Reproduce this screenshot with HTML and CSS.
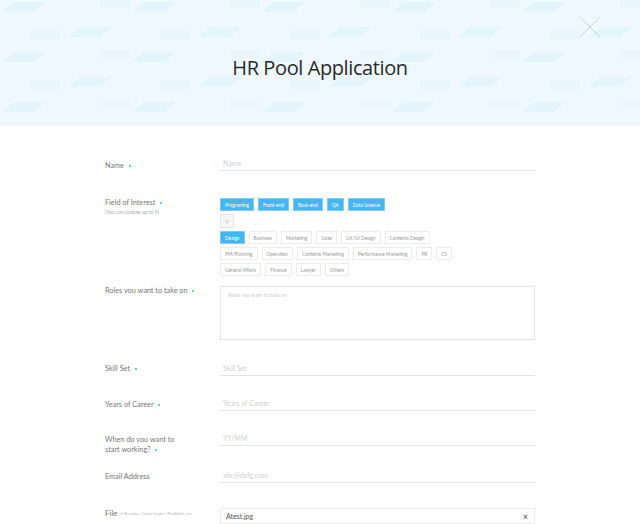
FILE: index.html
```html
<!DOCTYPE html>
<html lang="en">
<head>
<meta charset="utf-8">
<title>HR Pool Application</title>
<link rel="stylesheet" href="styles.css">
</head>
<body>
<header class="hero">
  <svg class="hero-bg" width="640" height="126" aria-hidden="true">
    <defs>
      <pattern id="para" x="0" y="0" width="130" height="50" patternUnits="userSpaceOnUse">
        <polygon points="14,2 46,2 34,12 2,12" fill="#e4f4fd"/>
        <polygon points="80,27 112,27 100,37 68,37" fill="#e4f4fd"/>
        <polygon points="100,0 130,0 130,8 100,8" fill="#eaf6fd"/>
        <polygon points="30,30 60,30 60,40 30,40" fill="#eaf6fd"/>
      </pattern>
    </defs>
    <rect width="640" height="126" fill="url(#para)"/>
  </svg>
  <h1 class="title">HR Pool Application</h1>
  <button class="close" aria-label="Close">
    <svg width="22" height="22" viewBox="0 0 22 22"><path d="M1 1 L21 21 M21 1 L1 21" stroke="#c9d2d8" stroke-width="1" fill="none"/></svg>
  </button>
</header>

<main class="form">
  <div class="row row-name">
    <div class="label">Name <span class="req"></span></div>
    <div class="field"><div class="input ph">Name</div></div>
  </div>

  <div class="row row-interest">
    <div class="label">Field of Interest <span class="req"></span><div class="sub">(You can choose up to 5)</div></div>
    <div class="field">
      <div class="tags">
        <span class="tag on">Programing</span><span class="tag on">Front-end</span><span class="tag on">Back-end</span><span class="tag on">QA</span><span class="tag on">Data Science</span>
      </div>
      <div class="tags"><span class="plus">+</span></div>
      <div class="tags">
        <span class="tag on">Design</span><span class="tag">Business</span><span class="tag">Marketing</span><span class="tag">Sales</span><span class="tag">UX/UI Design</span><span class="tag">Contents Design</span>
      </div>
      <div class="tags">
        <span class="tag">PM/Planning</span><span class="tag">Operation</span><span class="tag">Contents Marketing</span><span class="tag">Performance Marketing</span><span class="tag">PR</span><span class="tag">CS</span>
      </div>
      <div class="tags">
        <span class="tag">General Affairs</span><span class="tag">Finance</span><span class="tag">Lawyer</span><span class="tag">Others</span>
      </div>
    </div>
  </div>

  <div class="row row-roles">
    <div class="label">Roles you want to take on <span class="req"></span></div>
    <div class="field"><div class="textarea ph">Roles you want to take on</div></div>
  </div>

  <div class="row row-skill">
    <div class="label">Skill Set <span class="req"></span></div>
    <div class="field"><div class="input ph">Skill Set</div></div>
  </div>

  <div class="row row-years">
    <div class="label">Years of Career <span class="req"></span></div>
    <div class="field"><div class="input ph">Years of Career</div></div>
  </div>

  <div class="row row-when">
    <div class="label">When do you want to<br>start working? <span class="req"></span></div>
    <div class="field"><div class="input ph">YY/MM</div></div>
  </div>

  <div class="row row-email">
    <div class="label">Email Address</div>
    <div class="field"><div class="input ph">abc@defg.com</div></div>
  </div>

  <div class="row row-file">
    <div class="label"><span class="file-l">File</span> <span class="hint">• Resume, Cover Letter, Portfolio, etc.</span></div>
    <div class="field"><div class="filebox"><span>Atest.jpg</span><span class="x">×</span></div></div>
  </div>
</main>
</body>
</html>
```

FILE: styles.css
```css
* { box-sizing: border-box; }
html, body { margin: 0; padding: 0; }
body {
  background: #fff;
  font-family: Lato, "Noto Sans", sans-serif;
  font-weight: 400;
  color: #666;
  overflow: hidden;
  height: 524px;
}

.hero {
  position: relative;
  height: 126px;
  background: #eef8fe;
  display: flex;
  align-items: center;
  justify-content: center;
  overflow: hidden;
}
.hero-bg { position: absolute; left: 0; top: 0; }
.title {
  position: relative;
  margin: 0;
  padding-top: 8px;
  font-family: "Open Sans", Lato, sans-serif;
  font-weight: 400;
  font-size: 20px;
  letter-spacing: -0.4px;
  color: #2a2a2a;
}
.close {
  position: absolute;
  left: 579px;
  top: 16px;
  width: 22px;
  height: 22px;
  padding: 0;
  border: 0;
  background: none;
}
.close svg { display: block; }

.form {
  padding-left: 105px;
  width: 535px;
  display: flex;
  flex-direction: column;
}
.row {
  display: grid;
  grid-template-columns: 115px 315px;
  align-items: start;
}
.label {
  font-size: 7.3px;
  line-height: 10px;
  color: #777;
}
.req {
  display: inline-block;
  width: 2px;
  height: 2px;
  border-radius: 50%;
  background: #3fb2f0;
  margin-left: 3px;
  vertical-align: middle;
}
.sub { font-size: 5px; line-height: 8px; color: #aaa; }
.file-l { font-size: 8px; }
.hint { font-size: 4.4px; color: #b5b5b5; margin-left: 1px; vertical-align: 1px; }

.ph { color: #cfcfcf; }
.input {
  height: 13px;
  font-size: 7px;
  line-height: 11px;
  padding-left: 3px;
  border-bottom: 1px solid #e3e3e3;
}
.textarea {
  height: 54px;
  border: 1px solid #e3e3e3;
  font-size: 5.2px;
  padding: 5px 7px;
}
.filebox {
  height: 16px;
  border: 1px solid #ececec;
  display: flex;
  justify-content: space-between;
  align-items: center;
  padding: 0 6px 0 5px;
  font-size: 7px;
  color: #555;
}
.filebox .x { font-size: 9px; color: #444; }

.row-name { margin-top: 32px; }
.row-name .label { padding-top: 3px; }
.row-interest { margin-top: 27px; }
.row-roles { margin-top: 7px; }
.row-skill { margin-top: 23px; }
.row-skill .label { padding-top: 1px; }
.row-years { margin-top: 22px; }
.row-years .label { padding-top: 2px; }
.row-when { margin-top: 22px; }
.row-when .label { padding-top: 2px; }
.row-email { margin-top: 15px; }
.row-email .label { padding-top: 2px; }
.row-file { margin-top: 25px; }

.tags {
  display: flex;
  flex-wrap: wrap;
  gap: 4px;
  margin-bottom: 3px;
}
.tag {
  height: 13px;
  padding: 0 4px;
  display: flex;
  align-items: center;
  font-size: 4.8px;
  color: #999;
  background: #fff;
  border: 1px solid #ececec;
}
.tag.on {
  background: #45b6f2;
  border-color: #7fcdf5;
  color: #fff;
}
.plus {
  width: 14px;
  height: 14px;
  display: flex;
  align-items: center;
  justify-content: center;
  background: #f6f6f6;
  border: 1px solid #e6e6e6;
  color: #c8c8c8;
  font-size: 9px;
}
```
